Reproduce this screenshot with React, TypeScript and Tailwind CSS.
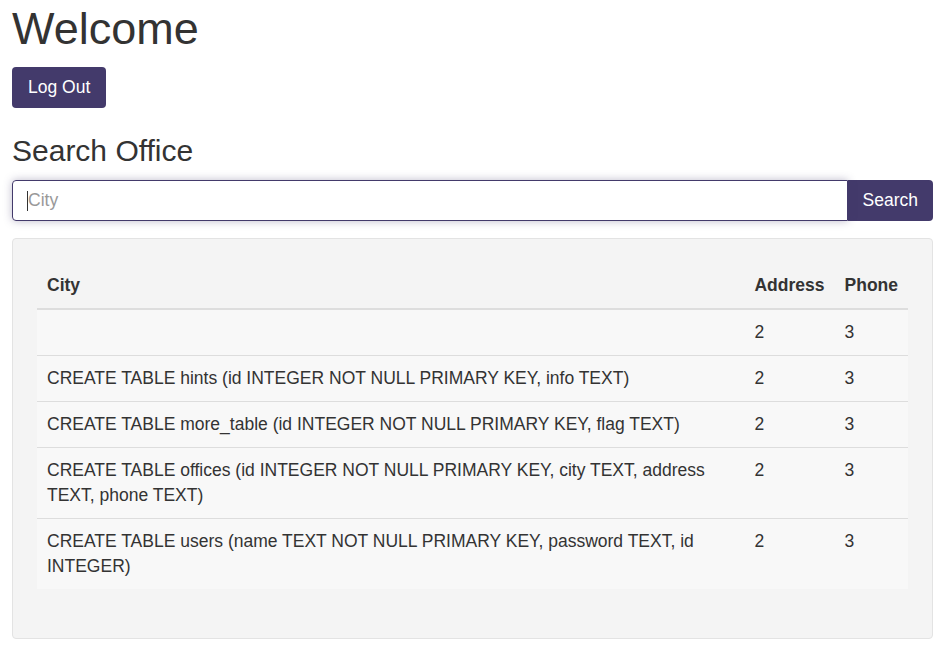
import React from "react";

const rows = [
  { city: "", address: "2", phone: "3" },
  { city: "CREATE TABLE hints (id INTEGER NOT NULL PRIMARY KEY, info TEXT)", address: "2", phone: "3" },
  { city: "CREATE TABLE more_table (id INTEGER NOT NULL PRIMARY KEY, flag TEXT)", address: "2", phone: "3" },
  { city: "CREATE TABLE offices (id INTEGER NOT NULL PRIMARY KEY, city TEXT, address TEXT, phone TEXT)", address: "2", phone: "3" },
  { city: "CREATE TABLE users (name TEXT NOT NULL PRIMARY KEY, password TEXT, id INTEGER)", address: "2", phone: "3" },
];

export default function App() {
  return (
    <div className="min-h-screen bg-white text-[#333] text-[17.5px] leading-[25px] font-['Liberation_Sans',Arial,sans-serif]">
      <div className="pl-3 pr-[11px]">
        {/* Header */}
        <h1 className="text-[45px] leading-[50px] mt-[4px] mb-[13px] font-normal">Welcome</h1>
        <button className="h-[41px] px-[16px] rounded-[4px] bg-[#433a6b] text-white">Log Out</button>

        <h3 className="text-[30px] leading-[33px] mt-[26px] mb-[13px] font-normal">Search Office</h3>

        {/* Search bar */}
        <div className="flex h-[41px]">
          <div className="relative flex-1">
            <input
              className="w-full h-full border border-[#433a6b] rounded-l-[4px] px-[15px] outline-none shadow-[0_0_8px_rgba(67,58,107,0.35)] placeholder:text-[#999]"
              placeholder="City"
            />
            <span className="absolute left-[15px] top-[11px] h-[20px] w-px bg-[#333]" />
          </div>
          <button className="px-[15px] bg-[#433a6b] text-white rounded-r-[4px]">Search</button>
        </div>

        {/* Results */}
        <div className="mt-[17px] border border-[#e3e3e3] rounded-[4px] bg-[#f4f4f4] px-[24px] pt-[23px] pb-[49px]">
          <table className="w-full border-collapse">
            <thead>
              <tr className="border-b-2 border-[#ddd]">
                <th className="text-left font-bold px-[10px] py-[10.5px]">City</th>
                <th className="text-left font-bold px-[10px] py-[10.5px] w-[90px]">Address</th>
                <th className="text-left font-bold px-[10px] py-[10.5px] w-[73px]">Phone</th>
              </tr>
            </thead>
            <tbody>
              {rows.map((r, i) => (
                <tr key={i} className={`bg-[#f8f8f8] ${i > 0 ? "border-t border-[#ddd]" : ""}`}>
                  <td className="align-top px-[10px] py-[10px] h-[46px]">{r.city}</td>
                  <td className="align-top px-[10px] py-[10px]">{r.address}</td>
                  <td className="align-top px-[10px] py-[10px]">{r.phone}</td>
                </tr>
              ))}
            </tbody>
          </table>
        </div>
      </div>
    </div>
  );
}
